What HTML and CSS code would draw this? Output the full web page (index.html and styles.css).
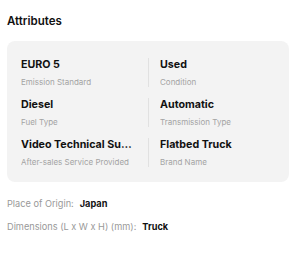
FILE: index.html
```html
<!DOCTYPE html>
<html>
<head>
<meta charset="utf-8">
<link rel="stylesheet" href="styles.css">
</head>
<body>
<div class="page">
  <h2 class="title">Attributes</h2>
  <div class="card">
    <div class="item">
      <div class="value">EURO 5</div>
      <div class="label">Emission Standard</div>
    </div>
    <div class="item right">
      <div class="value">Used</div>
      <div class="label">Condition</div>
    </div>
    <div class="item">
      <div class="value">Diesel</div>
      <div class="label">Fuel Type</div>
    </div>
    <div class="item right">
      <div class="value">Automatic</div>
      <div class="label">Transmission Type</div>
    </div>
    <div class="item">
      <div class="value">Video Technical Support</div>
      <div class="label">After-sales Service Provided</div>
    </div>
    <div class="item right">
      <div class="value">Flatbed Truck</div>
      <div class="label">Brand Name</div>
    </div>
  </div>
  <div class="rows">
    <div class="row"><span class="k">Place of Origin:</span><span class="v">Japan</span></div>
    <div class="row"><span class="k">Dimensions (L x W x H) (mm):</span><span class="v">Truck</span></div>
  </div>
</div>
</body>
</html>
```
FILE: styles.css
```css
html, body {
  margin: 0;
  padding: 0;
  background: #ffffff;
}
body {
  font-family: Inter, "Noto Sans", sans-serif;
  color: #111111;
}
.page {
  padding: 13px 11px 0 7px;
}
.title {
  margin: 0;
  font-size: 11.5px;
  line-height: 16px;
  font-weight: 600;
  color: #111;
}
.card {
  margin-top: 12px;
  background: #f3f3f3;
  border-radius: 8px;
  padding: 17px 14px 15px 14px;
  display: grid;
  grid-template-columns: 1fr 1fr;
  row-gap: 11px;
}
.item {
  display: flex;
  flex-direction: column;
  gap: 5px;
  min-width: 0;
  padding-right: 13px;
}
.item.right {
  border-left: 1px solid #e1e1e1;
  padding-left: 11px;
  padding-right: 0;
}
.value {
  font-size: 10.7px;
  line-height: 14px;
  font-weight: 700;
  white-space: nowrap;
  overflow: hidden;
  text-overflow: ellipsis;
}
.label {
  font-size: 8px;
  line-height: 10px;
  color: #a3a3a3;
  white-space: nowrap;
  overflow: hidden;
  text-overflow: ellipsis;
}
.rows {
  margin-top: 15px;
  display: flex;
  flex-direction: column;
  gap: 9px;
}
.row {
  font-size: 9.2px;
  line-height: 14px;
  display: flex;
  gap: 6px;
}
.k {
  color: #999999;
}
.v {
  font-weight: 700;
  color: #111;
}
```
